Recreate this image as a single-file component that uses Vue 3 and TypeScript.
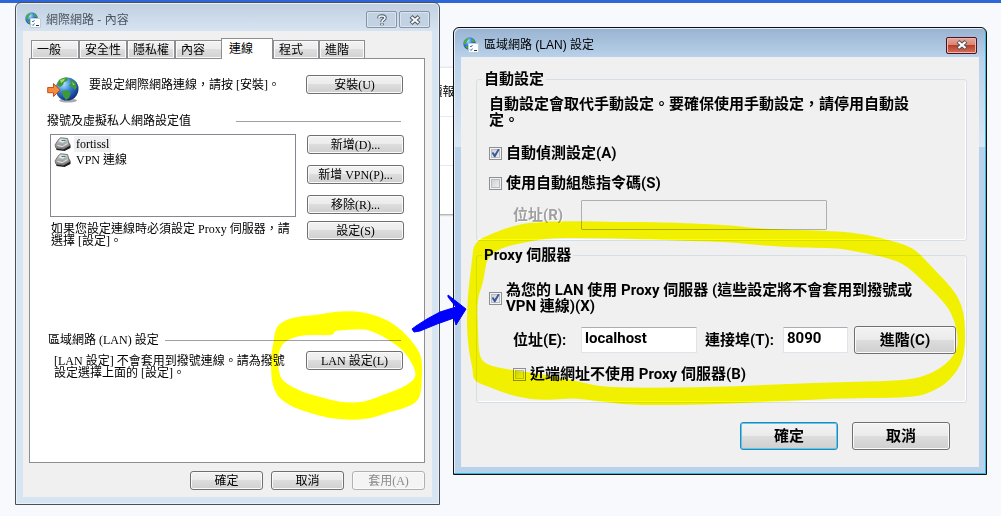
<script setup lang="ts">
import { ref } from 'vue'

type Point = [number, number]

const tabs = ['一般', '安全性', '隱私權', '內容', '連線', '程式', '進階']
const activeTab = ref('連線')

const connections = ['fortissl', 'VPN 連線']
const selectedConnection = ref('fortissl')

const autoDetect = ref(true)
const useScript = ref(false)
const useProxy = ref(true)
const bypassLocal = ref(false)
const proxyHost = ref('localhost')
const proxyPort = ref('8090')

// Closed outline rounded through the midpoints of neighbouring points.
function outline(points: Point[]): string {
  const mid = (a: Point, b: Point) => `${(a[0] + b[0]) / 2} ${(a[1] + b[1]) / 2}`
  const last = points[points.length - 1]
  let d = `M${mid(last, points[0])}`
  points.forEach((p, i) => {
    d += `Q${p[0]} ${p[1]} ${mid(p, points[(i + 1) % points.length])}`
  })
  return d + 'Z'
}

const smallRing = outline([
  [275, 330], [280, 323], [293, 317], [316, 315], [333, 312], [348, 311], [364, 312], [386, 319],
  [402, 330], [415, 345], [422, 357], [422, 376], [421, 394], [416, 403], [402, 409], [389, 412],
  [370, 419], [350, 420], [328, 418], [310, 413], [292, 407], [279, 398], [275, 391], [272, 383],
  [271, 370], [271, 355], [274, 340],
]) + outline([
  [334, 331], [334, 335], [320, 335], [305, 335], [295, 337], [285, 341], [280, 348], [278, 357],
  [279, 375], [285, 383], [302, 392], [320, 397], [343, 403], [365, 402], [380, 396], [402, 388],
  [414, 380], [416, 374], [413, 365], [405, 352], [390, 340], [372, 331], [363, 329], [344, 330],
])

const largeRing = outline([
  [474, 242], [493, 233], [513, 226], [533, 222], [577, 221], [617, 222], [657, 222], [730, 225],
  [760, 229], [837, 231], [863, 234], [893, 241], [914, 248], [930, 265], [953, 289], [962, 305],
  [965, 323], [965, 350], [960, 367], [947, 383], [933, 391], [920, 396], [893, 398], [847, 398],
  [787, 401], [720, 404], [680, 405], [630, 405], [597, 401], [573, 398], [550, 400], [528, 399],
  [507, 394], [492, 388], [473, 381], [473, 370], [469, 353], [467, 330], [467, 317], [468, 293],
  [472, 260],
]) + outline([
  [487, 259], [498, 249], [517, 244], [547, 238], [590, 238], [637, 239], [693, 241], [730, 242],
  [777, 247], [837, 248], [853, 251], [880, 256], [903, 263], [920, 278], [947, 305], [955, 322],
  [958, 337], [957, 352], [942, 368], [920, 378], [893, 381], [840, 382], [787, 384], [720, 387],
  [630, 388], [597, 386], [577, 381], [543, 374], [510, 370], [487, 365], [479, 357], [478, 330],
  [477, 300], [483, 283], [485, 270],
])
</script>

<template>
  <main class="desktop">
    <div class="backdrop" aria-hidden="true">
      <div class="backdrop-row">續報</div>
      <div class="backdrop-row"></div>
      <div class="backdrop-row"></div>
    </div>

    <svg class="defs" aria-hidden="true">
      <defs>
        <radialGradient id="globe" cx="35%" cy="28%" r="75%">
          <stop offset="0" stop-color="#b8e4ff" />
          <stop offset=".45" stop-color="#3b86dc" />
          <stop offset="1" stop-color="#0c2c84" />
        </radialGradient>
        <linearGradient id="metal" x1="0" y1="0" x2="0" y2="1">
          <stop offset="0" stop-color="#d6d6d6" />
          <stop offset="1" stop-color="#7d7d7d" />
        </linearGradient>
        <symbol id="title-icon" viewBox="0 0 16 16">
          <circle cx="6.500" cy="6.500" r="6.200" fill="url(#globe)" />
          <path d="M1 5C2 2 4 1 6 1L5 3 3.500 5 3 7 1 7ZM9 1L12 4 11.500 5.500 9 4.500ZM2 9L4.500 9 5 11 4 12Z" fill="#4bab3c" />
          <path d="M5.500 6.500h10v9h-10z" fill="#fdfdfd" stroke="#c3cbd6" />
          <path d="M7 9l1 1 1.500-2M7 12.500l1 1 1.500-2" fill="none" stroke="#3478c8" />
          <path d="M11 13.500h3" stroke="#333" />
        </symbol>
      </defs>
    </svg>

    <section class="window options" aria-label="網際網路 - 內容">
      <header class="titlebar">
        <svg class="title-icon" aria-hidden="true"><use href="#title-icon" /></svg>
        <h1>網際網路 - 內容</h1>
        <button class="caption" type="button" aria-label="說明">
          <svg viewBox="0 0 12 12" aria-hidden="true">
            <path d="M3 4.200V3.500C3 1.500 9 1.200 9 3.900 9 5.800 6 5.700 6 8M6 9.200V11.200" fill="none" stroke="#4c5763" stroke-width="3.400" />
            <path d="M3 4.200V3.500C3 1.500 9 1.200 9 3.900 9 5.800 6 5.700 6 8M6 9.500V11" fill="none" stroke="#f2f5f8" stroke-width="1.600" />
          </svg>
        </button>
        <button class="caption" type="button" aria-label="關閉">
          <svg viewBox="0 0 12 12" aria-hidden="true">
            <path d="M2 2.500L10 9.500M10 2.500L2 9.500" stroke="#4c5763" stroke-width="4.200" />
            <path d="M2.500 3L9.500 9M9.500 3L2.500 9" stroke="#f5f7f9" stroke-width="2.200" />
          </svg>
        </button>
      </header>

      <div class="client">
        <div class="tabs" role="tablist">
          <button
            v-for="(tab, i) in tabs"
            :key="tab"
            type="button"
            role="tab"
            class="tab"
            :class="{ active: tab === activeTab, short: i > 4 }"
            :aria-selected="tab === activeTab"
            @click="activeTab = tab"
          >{{ tab }}</button>
        </div>

        <div class="page" role="tabpanel">
          <div class="setup">
            <svg class="setup-icon" viewBox="0 0 32 26" aria-hidden="true">
              <ellipse cx="21" cy="23.500" rx="9" ry="2" fill="#00000055" />
              <circle cx="20" cy="12" r="11.500" fill="url(#globe)" />
              <path d="M12 3C15 1 18 0 21 1L20 4 17 5 16 8 13 10 10 8ZM23 2L28 5 30 10 28 13 25 10 22 9 24 6ZM15 14L20 13 24 16 22 21 19 23 16 19Z" fill="#3d9a35" />
              <path d="M13 3L18 1.500 17 4 14 6ZM25 5L28 8 26 8Z" fill="#a5da6d" />
              <path d="M.700 10.500H6.500V6.500L13 13 6.500 19.500V15.700H.700Z" fill="#f68b3c" stroke="#c9501a" />
            </svg>
            <p>要設定網際網路連線，請按 [安裝]。</p>
            <button class="btn" type="button">安裝(U)</button>
          </div>

          <h2 class="divider dial">撥號及虛擬私人網路設定值</h2>
          <div class="dial-grid">
            <ul class="listbox" role="listbox" aria-label="撥號及虛擬私人網路設定值">
              <li
                v-for="name in connections"
                :key="name"
                role="option"
                :aria-selected="name === selectedConnection"
                @click="selectedConnection = name"
              >
                <svg viewBox="0 0 16 14" aria-hidden="true">
                  <path d="M1 9L3 8 14 5 16 8V11L10 14 2 13Z" fill="#1c1c1c" />
                  <path d="M.500 8L4 2.500 6 .800 13 1.500 14 5 15 8.500 9 12 1.500 11Z" fill="url(#metal)" stroke="#777" />
                  <path d="M4 4L7 2 12 3 8 6Z" fill="#e6e6e6" />
                  <path d="M7 3.500h4" stroke="#159090" />
                  <path d="M3 8.500l5 1 5-3" fill="none" stroke="#efefef" />
                </svg>
                <span :class="{ picked: name === selectedConnection }">{{ name }}</span>
              </li>
            </ul>
            <div class="stack">
              <button class="btn" type="button">新增(D)...</button>
              <button class="btn" type="button">新增 VPN(P)...</button>
              <button class="btn" type="button">移除(R)...</button>
            </div>
            <p>如果您設定連線時必須設定 Proxy 伺服器，請選擇 [設定]。</p>
            <button class="btn" type="button">設定(S)</button>
          </div>

          <h2 class="divider lan">區域網路 (LAN) 設定</h2>
          <div class="lan-row">
            <p>[LAN 設定] 不會套用到撥號連線。請為撥號設定選擇上面的 [設定]。</p>
            <button class="btn" type="button">LAN 設定(L)</button>
          </div>
        </div>

        <footer class="actions">
          <button class="btn" type="button">確定</button>
          <button class="btn" type="button">取消</button>
          <button class="btn" type="button" disabled>套用(A)</button>
        </footer>
      </div>
    </section>

    <section class="window lan-dialog" aria-label="區域網路 (LAN) 設定">
      <header class="titlebar">
        <svg class="title-icon" aria-hidden="true"><use href="#title-icon" /></svg>
        <h1>區域網路 (LAN) 設定</h1>
        <button class="caption close" type="button" aria-label="關閉">
          <svg viewBox="0 0 12 12" aria-hidden="true">
            <path d="M2 2.500L10 9.500M10 2.500L2 9.500" stroke="#50535f" stroke-width="4.200" />
            <path d="M2.500 3L9.500 9M9.500 3L2.500 9" stroke="#fff" stroke-width="2.200" />
          </svg>
        </button>
      </header>

      <form class="client" @submit.prevent>
        <fieldset class="auto">
          <legend>自動設定</legend>
          <p>自動設定會取代手動設定。要確保使用手動設定，請停用自動設定。</p>
          <label class="check"><input v-model="autoDetect" type="checkbox" /><span>自動偵測設定(A)</span></label>
          <label class="check"><input v-model="useScript" type="checkbox" /><span>使用自動組態指令碼(S)</span></label>
          <div class="field disabled">
            <label for="script-url">位址(R)</label>
            <input id="script-url" type="text" disabled />
          </div>
        </fieldset>

        <fieldset class="proxy">
          <legend>Proxy 伺服器</legend>
          <label class="check"><input v-model="useProxy" type="checkbox" /><span>為您的 LAN 使用 Proxy 伺服器 (這些設定將不會套用到撥號或 VPN 連線)(X)</span></label>
          <div class="field">
            <label for="proxy-host">位址(E):</label>
            <input id="proxy-host" v-model="proxyHost" class="host" type="text" />
            <label for="proxy-port" class="port-label">連接埠(T):</label>
            <input id="proxy-port" v-model="proxyPort" class="port" type="text" />
            <button class="btn" type="button">進階(C)</button>
          </div>
          <label class="check bypass"><input v-model="bypassLocal" type="checkbox" /><span>近端網址不使用 Proxy 伺服器(B)</span></label>
        </fieldset>

        <footer class="actions">
          <button class="btn default" type="submit">確定</button>
          <button class="btn" type="button">取消</button>
        </footer>
      </form>
    </section>

    <svg class="ink marker" viewBox="0 0 1001 516" aria-hidden="true">
      <path :d="smallRing" fill="#ff0" fill-rule="evenodd" />
      <path :d="largeRing" fill="#ff0" fill-rule="evenodd" />
    </svg>
    <svg class="ink" viewBox="0 0 1001 516" aria-hidden="true">
      <path d="M412 329L414 332 420 331 437 324 454 318 456 325 466 309 448 295 448 297 456 307 440 312 427 319 416 326Z" fill="#00f" stroke="#00f" stroke-linejoin="round" />
    </svg>
  </main>
</template>

<style>
body {
  margin: 0;
  background: #f8f9fc;
}
</style>

<style scoped>
* {
  box-sizing: border-box;
}

h1,
h2,
p,
ul {
  margin: 0;
  padding: 0;
  font-size: inherit;
  font-weight: inherit;
}

button,
input {
  margin: 0;
  font: inherit;
  color: inherit;
}

.desktop {
  position: relative;
  display: grid;
  grid-template-columns: 425fr 534fr;
  column-gap: 13px;
  align-items: start;
  min-height: 100vh;
  padding: 2px 14px 0 15px;
  overflow: hidden;
  background: linear-gradient(#2e66d8 3px, #f8f9fc 3px);
  color: #000;
}

.defs {
  position: absolute;
  width: 0;
  height: 0;
}

.backdrop {
  position: absolute;
  top: 67px;
  left: 42%;
  width: 60px;
  background: #fff;
  box-shadow: 0 1px 2px #999;
}

.backdrop-row {
  height: 49px;
  padding-left: 10px;
  border-top: 1px solid #e6e9ee;
  font: 12px/48px "Liberation Sans", "Noto Sans CJK TC", sans-serif;
}

.window {
  position: relative;
  padding: 0 7px 7px;
  border: 1px solid #4a4f57;
  border-radius: 6px 6px 0 0;
}

.options {
  background: linear-gradient(#c0d0e0, #d7e4f2 29px);
  box-shadow: inset 0 0 0 1px #e8f0f8;
  font: 12px/12px "Liberation Serif", "Noto Sans CJK TC", serif;
}

.lan-dialog {
  margin-top: 25px;
  border-color: #111;
  background:
    linear-gradient(#b9d1ea, #d9e6f4) right 29px / 7px 90px no-repeat,
    linear-gradient(#b9d1ea, #d9e6f4) left 29px / 7px 90px no-repeat,
    linear-gradient(#98b3d1, #b9d1ea 29px);
  box-shadow: inset -1px -1px 0 #35b8d6, inset 1px 1px 0 #e4eef8;
  font: bold 15px/16px Roboto, "Noto Sans CJK TC", sans-serif;
}

.titlebar {
  display: flex;
  align-items: center;
  height: 28px;
  padding: 5px 2px 0;
  font: 12px/16px "Liberation Sans", "Noto Sans CJK TC", sans-serif;
}

.titlebar h1 {
  flex: 1;
  margin-left: 5px;
}

.options .titlebar h1 {
  color: #4c5560;
}

.title-icon {
  width: 16px;
  height: 16px;
}

.caption {
  display: grid;
  place-items: center;
  width: 31px;
  height: 17px;
  margin-left: 2px;
  padding: 0;
  border: 1px solid #8793a4;
  border-radius: 2px;
  background: #c3d2e2;
  box-shadow: inset 0 0 0 1px #dbe5ef;
}

.caption svg {
  width: 12px;
  height: 12px;
}

.close {
  border-color: #4b1220;
  background: linear-gradient(#e6a799, #d98373 48%, #b8402b 50%, #d6705a);
  box-shadow: inset 0 0 0 1px #eeb7aa;
}

.lan-dialog .titlebar {
  height: 29px;
}

.client {
  background: #f0f0f0;
}

.btn {
  height: 19px;
  padding: 0 2px;
  border: 1px solid #707070;
  border-radius: 3px;
  background: linear-gradient(#f3f3f3, #ebebeb 48%, #dddddd 50%, #cfcfcf);
  box-shadow: inset 0 0 0 1px #fafafa;
  text-align: center;
  white-space: nowrap;
}

.btn:disabled {
  border-color: #adb2b5;
  background: #f4f4f4;
  color: #8a8a8a;
}

.actions {
  display: flex;
  justify-content: flex-end;
}

.options .client {
  padding: 6px 7px 7px 6px;
}

.tabs {
  display: flex;
  align-items: flex-end;
  height: 21px;
  padding-left: 2px;
}

.tab {
  width: 48px;
  height: 18px;
  padding: 0 0 0 5px;
  border: 1px solid #8c8e94;
  border-bottom: 0;
  background: linear-gradient(#f3f3f3, #ececec 48%, #dedede 50%, #d2d2d2);
  box-shadow: inset 0 0 0 1px #fafafa;
  text-align: left;
}

.tab.active {
  z-index: 1;
  width: 52px;
  height: 21px;
  margin: 0 0 -1px -2px;
  padding: 0 0 1px 7px;
  background: #fff;
  box-shadow: none;
}

.tab.short {
  width: 46px;
}

.page {
  padding: 16px 21px 83px 17px;
  border: 1px solid #8c8e94;
  background: #fff;
}

.setup {
  display: grid;
  grid-template-columns: 32px 1fr 97px;
  column-gap: 10px;
}

.setup-icon {
  width: 32px;
  height: 26px;
  margin-top: 2px;
}

.setup p {
  margin-top: 4px;
  white-space: nowrap;
}

.divider {
  display: flex;
  align-items: center;
  line-height: 12px;
  padding-right: 2px;
}

.divider::after {
  content: "";
  flex: 1;
  height: 1px;
  background: #a0a0a0;
}

.dial {
  margin-top: 12px;
}

.dial::after {
  margin-left: 45px;
}

.lan {
  margin-top: 87px;
  padding-left: 1px;
}

.lan::after {
  margin-left: 6px;
}

.dial-grid {
  display: grid;
  grid-template-columns: 1fr 97px;
  column-gap: 11px;
  row-gap: 4px;
  padding-left: 3px;
  margin-top: 7px;
  margin-right: -1px;
}

.dial-grid p {
  padding: 2px 0 0 1px;
}

.listbox {
  height: 83px;
  padding: 1px 3px;
  border: 1px solid #828790;
  list-style: none;
}

.listbox li {
  display: flex;
  align-items: center;
  gap: 3px;
  height: 16px;
}

.listbox svg {
  width: 17px;
  height: 14px;
}

.listbox span {
  padding: 2px 2px;
}

.listbox .picked {
  background: #f0f0f0;
}

.stack {
  display: flex;
  flex-direction: column;
  gap: 11px;
  padding-top: 1px;
}

.lan-row {
  display: grid;
  grid-template-columns: 1fr 97px;
  column-gap: 20px;
  padding-left: 7px;
  margin-top: 5px;
}

.lan-row p {
  padding-top: 4px;
}

.options .actions {
  gap: 8px;
  margin-top: 8px;
}

.options .actions .btn {
  width: 73px;
}

.lan-dialog .client {
  padding: 14px 12px 17px 15px;
}

fieldset {
  min-width: 0;
  margin: 0;
  border: 1px solid #d5dfe5;
  border-radius: 3px;
  box-shadow: inset -1px -1px 0 #fff;
}

legend {
  margin-left: -7px;
  padding: 0 2px;
}

.auto {
  padding: 9px 12px 10px;
}

.auto p {
  margin-right: 40px;
  margin-bottom: 17px;
}

.proxy {
  margin-top: 6px;
  padding: 19px 10px 20px 12px;
}

.check {
  display: flex;
  align-items: center;
  gap: 4px;
}

.check + .check {
  margin-top: 14px;
}

.check span {
  max-width: 412px;
}

.check input {
  position: relative;
  flex: none;
  width: 13px;
  height: 13px;
  appearance: none;
  border: 1px solid #8e8f8f;
  background: linear-gradient(135deg, #c6cacf, #f6f6f6);
  box-shadow: inset 0 0 0 1px #f4f4f4, inset 0 0 0 2px #b8bcc2;
}

.check input:checked::after {
  content: "";
  position: absolute;
  inset: 1px;
  background: #3b5a9c;
  clip-path: polygon(8% 50%, 24% 38%, 42% 62%, 78% 4%, 96% 10%, 48% 98%, 36% 98%);
}

.field {
  display: flex;
  align-items: center;
  padding-left: 24px;
}

.field label {
  width: 68px;
  white-space: nowrap;
}

.field input {
  height: 26px;
  padding: 0 3px 4px;
  border: 1px solid #e2e3ea;
  border-top-color: #abadb3;
  border-radius: 1px;
  background: #fff;
}

.disabled {
  margin-top: 9px;
}

.disabled label {
  color: #a0a0a0;
  text-shadow: 1px 1px 0 #fff;
}

.disabled input {
  width: 246px;
  height: 30px;
  border: 1px solid #afafaf;
  background: #f0f0f0;
}

.proxy .field {
  margin-top: 12px;
}

.field .host {
  width: 116px;
}

.field .port-label {
  width: 86px;
  padding-left: 8px;
}

.field .port {
  width: 65px;
}

.lan-dialog .btn {
  height: 28px;
}

.field .btn {
  width: 102px;
  margin-left: 6px;
}

.bypass {
  margin-top: 12px;
  padding-left: 24px;
}

.lan-dialog .actions {
  gap: 14px;
  margin-top: 19px;
  padding-right: 17px;
}

.lan-dialog .actions .btn {
  width: 98px;
}

.lan-dialog .default {
  border-color: #3c7fb1;
  box-shadow: inset 0 0 0 1px #48d0f5;
}

.ink {
  position: absolute;
  top: 0;
  left: 0;
  width: 100%;
  pointer-events: none;
}

.marker {
  mix-blend-mode: multiply;
}
</style>
